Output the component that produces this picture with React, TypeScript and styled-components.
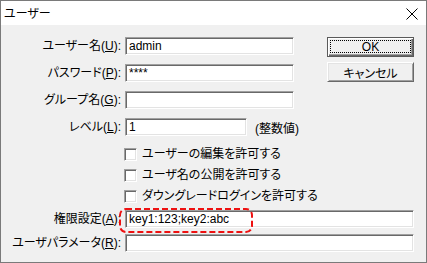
import React from 'react';
import styled, { createGlobalStyle } from 'styled-components';

const GlobalStyle = createGlobalStyle`
  html, body {
    margin: 0;
    padding: 0;
    background: #ffffff;
  }
  body {
    font-family: "Liberation Sans", "Noto Sans CJK JP", sans-serif;
    font-size: 12px;
    color: #000;
    font-feature-settings: "palt";
  }
`;

type FieldProps = {
  label: string;
  mnemonic: string;
  value?: string;
  width?: number;
  hint?: string;
  spacing?: number;
  highlight?: boolean;
};

const fields: FieldProps[] = [
  { label: 'ユーザー名', mnemonic: 'U', value: 'admin', width: 169 },
  { label: 'パスワード', mnemonic: 'P', value: '****', width: 169 },
  { label: 'グループ名', mnemonic: 'G', value: '', width: 169 },
  { label: 'レベル', mnemonic: 'L', value: '1', width: 122, hint: '(整数値)', spacing: 0 },
];

const options = [
  'ユーザーの編集を許可する',
  'ユーザ名の公開を許可する',
  'ダウングレードログインを許可する',
];

function Field({ label, mnemonic, value = '', width, hint, spacing = 9, highlight }: FieldProps) {
  return (
    <FieldRow $spacing={spacing}>
      <Label>
        {label}(<u>{mnemonic}</u>):
      </Label>
      <FieldSlot $width={width}>
        <TextBox>{value}</TextBox>
        {highlight && (
          <HighlightRing width="134" height="25" viewBox="0 0 134 25">
            <rect x="1" y="1" width="132" height="23" rx="6" ry="6" fill="none"
              stroke="#ee1111" strokeWidth="2" strokeDasharray="6 3" />
          </HighlightRing>
        )}
      </FieldSlot>
      {hint && <Hint>{hint}</Hint>}
    </FieldRow>
  );
}

export default function App() {
  return (
    <>
      <GlobalStyle />
      <Window>
        <TitleBar>
          <Title>ユーザー</Title>
          <CloseIcon width="12" height="12" viewBox="0 0 12 12">
            <path d="M0.5 0.5 L11.5 11.5 M11.5 0.5 L0.5 11.5" stroke="#000" strokeWidth="1" fill="none" />
          </CloseIcon>
        </TitleBar>
        <Body>
          <TopSection>
            <FormColumn>
              {fields.map((f) => (
                <Field key={f.mnemonic} {...f} />
              ))}
              <CheckList>
                {options.map((o) => (
                  <CheckRow key={o}>
                    <CheckBox />
                    <CheckText>{o}</CheckText>
                  </CheckRow>
                ))}
              </CheckList>
            </FormColumn>
            <ButtonColumn>
              <DialogButton $default>OK</DialogButton>
              <DialogButton>キャンセル</DialogButton>
            </ButtonColumn>
          </TopSection>
          <BottomSection>
            <Field label="権限設定" mnemonic="A" value="key1:123;key2:abc" spacing={6} highlight />
            <Field label="ユーザパラメータ" mnemonic="R" spacing={0} />
          </BottomSection>
        </Body>
      </Window>
    </>
  );
}

const Window = styled.div`
  width: 427px;
  height: 263px;
  box-sizing: border-box;
  border: 1px solid #7a7a7a;
  background: #f0f0f0;
  display: flex;
  flex-direction: column;
`;

const TitleBar = styled.div`
  height: 24px;
  flex-shrink: 0;
  background: #ffffff;
  display: flex;
  align-items: center;
  justify-content: space-between;
  padding: 0 8px 0 3px;
`;

const Title = styled.span`
  font-size: 12px;
  line-height: 1;
  font-family: "Noto Sans CJK JP", sans-serif;
`;

const CloseIcon = styled.svg`
  display: block;
  margin-top: 1px;
`;

const Body = styled.div`
  flex: 1;
  padding: 12px 12px 0 0;
  display: flex;
  flex-direction: column;
`;

const TopSection = styled.div`
  display: flex;
  align-items: flex-start;
`;

const FormColumn = styled.div`
  flex: 1;
  display: flex;
  flex-direction: column;
`;

const FieldRow = styled.div<{ $spacing: number }>`
  display: flex;
  align-items: center;
  gap: 4px;
  height: 18px;
  margin-bottom: ${(p) => p.$spacing}px;
`;

const Label = styled.label`
  width: 120px;
  flex-shrink: 0;
  text-align: right;
  white-space: nowrap;
  line-height: 18px;

  u {
    text-decoration: underline;
    text-underline-offset: 1px;
  }
`;

const FieldSlot = styled.div<{ $width?: number }>`
  position: relative;
  height: 18px;
  ${(p) => (p.$width ? `width: ${p.$width}px; flex-shrink: 0;` : 'flex: 1;')}
`;

const TextBox = styled.div`
  height: 100%;
  box-sizing: border-box;
  background: #ffffff;
  border-style: solid;
  border-width: 1px;
  border-color: #a0a0a0 #ffffff #ffffff #a0a0a0;
  box-shadow: inset 1px 1px 0 #696969, inset -1px -1px 0 #e3e3e3;
  padding: 0 3px;
  line-height: 16px;
  white-space: nowrap;
  overflow: hidden;
`;

const HighlightRing = styled.svg`
  position: absolute;
  left: -6px;
  top: -2px;
  pointer-events: none;
`;

const Hint = styled.span`
  margin-left: 4px;
  white-space: nowrap;
`;

const CheckList = styled.div`
  margin-top: 12px;
  padding-left: 123px;
  display: flex;
  flex-direction: column;
  gap: 8px;
`;

const CheckRow = styled.label`
  display: flex;
  align-items: center;
  gap: 5px;
  height: 13px;
  white-space: nowrap;
`;

const CheckBox = styled.span`
  width: 13px;
  height: 13px;
  flex-shrink: 0;
  box-sizing: border-box;
  background: #ffffff;
  border-style: solid;
  border-width: 1px;
  border-color: #a0a0a0 #ffffff #ffffff #a0a0a0;
  box-shadow: inset 1px 1px 0 #696969, inset -1px -1px 0 #e3e3e3;
`;

const CheckText = styled.span`
  line-height: 13px;
`;

const ButtonColumn = styled.div`
  width: 87px;
  flex-shrink: 0;
  display: flex;
  flex-direction: column;
  gap: 5px;
`;

const DialogButton = styled.button<{ $default?: boolean }>`
  position: relative;
  height: 20px;
  padding: 0;
  box-sizing: border-box;
  font: inherit;
  font-size: 12px;
  color: #000;
  background: #f0f0f0;
  border-style: solid;
  border-width: 1px;
  border-color: ${(p) => (p.$default ? '#5a5a5a' : '#ffffff #696969 #696969 #ffffff')};
  box-shadow: ${(p) =>
    p.$default
      ? 'inset 1px 1px 0 #ffffff, inset -1px -1px 0 #696969, inset -2px -2px 0 #a0a0a0'
      : 'inset 1px 1px 0 #e3e3e3, inset -1px -1px 0 #a0a0a0'};

  &::after {
    content: '';
    display: ${(p) => (p.$default ? 'block' : 'none')};
    position: absolute;
    left: 2px;
    right: 2px;
    top: 2px;
    bottom: 3px;
    border: 1px dotted #000;
  }
`;

const BottomSection = styled.div`
  margin-top: 7px;
  display: flex;
  flex-direction: column;
`;
